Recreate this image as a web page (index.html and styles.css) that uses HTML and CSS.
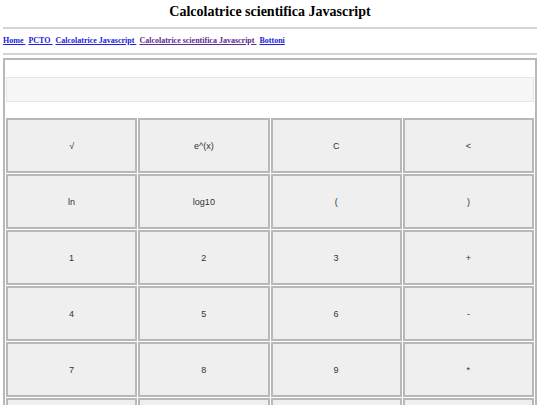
FILE: index.html
```html
<!DOCTYPE html>
<html lang="it">
<head>
    <meta charset="UTF-8">
    <meta name="viewport" content="width=device-width, initial-scale=1.0">
    <title>Calcolatrice scientifica Javascript</title>
    <link rel="stylesheet" href="styles.css">
</head>
<body>
    <h1 class="title">Calcolatrice scientifica Javascript</h1>
    <hr>
    <nav class="menu">
        <a href="#">Home&nbsp;</a>
        <a href="#">PCTO&nbsp;</a>
        <a href="#">Calcolatrice Javascript&nbsp;</a>
        <a href="#" class="visited">Calcolatrice scientifica Javascript&nbsp;</a>
        <a href="#">Bottoni</a>
    </nav>
    <hr>

    <!-- Calcolatrice -->
    <table class="calc">
        <tr>
            <td colspan="4" class="display-cell"><input type="text" id="display" class="display" readonly></td>
        </tr>
        <tr>
            <td><button class="key">&radic;</button></td>
            <td><button class="key">e^(x)</button></td>
            <td><button class="key">C</button></td>
            <td><button class="key">&lt;</button></td>
        </tr>
        <tr>
            <td><button class="key">ln</button></td>
            <td><button class="key">log10</button></td>
            <td><button class="key">(</button></td>
            <td><button class="key">)</button></td>
        </tr>
        <tr>
            <td><button class="key">1</button></td>
            <td><button class="key">2</button></td>
            <td><button class="key">3</button></td>
            <td><button class="key">+</button></td>
        </tr>
        <tr>
            <td><button class="key">4</button></td>
            <td><button class="key">5</button></td>
            <td><button class="key">6</button></td>
            <td><button class="key">-</button></td>
        </tr>
        <tr>
            <td><button class="key">7</button></td>
            <td><button class="key">8</button></td>
            <td><button class="key">9</button></td>
            <td><button class="key">*</button></td>
        </tr>
        <tr>
            <td><button class="key">0</button></td>
            <td><button class="key">.</button></td>
            <td><button class="key">=</button></td>
            <td><button class="key">/</button></td>
        </tr>
    </table>
</body>
</html>
```

FILE: styles.css
```css
/* Pagina */
body {
    margin: 0 3px;
    font-family: 'Liberation Serif', 'Times New Roman', serif;
    background-color: #fff;
    color: #000;
}

.title {
    font-size: 14px;
    line-height: 16px;
    text-align: center;
    margin: 0;
    padding: 4px 0 7px;
}

hr {
    border: none;
    border-top: 2px solid #d4d4d4;
    margin: 0;
}

/* Menu link */
.menu {
    padding: 7px 0;
    font-size: 8px;
    line-height: 10px;
    font-weight: bold;
}

.menu a {
    color: #2020dd;
    margin-right: 1px;
}

.menu a.visited {
    color: #5b2a92;
}

/* Calcolatrice */
.calc {
    width: 100%;
    table-layout: fixed;
    margin-top: 3px;
    border: 2px solid #b8b8b8;
    border-spacing: 1px;
}

.calc td {
    padding: 0;
}

.display-cell {
    height: 56px;
}

.display {
    display: block;
    width: 100%;
    height: 25px;
    box-sizing: border-box;
    border: 1px solid #e6e6e6;
    background-color: #f6f6f6;
}

.key {
    display: block;
    width: 100%;
    height: 55px;
    border: 2px solid #b8b8b8;
    background-color: #efefef;
    font-family: 'Liberation Sans', Arial, sans-serif;
    font-size: 9px;
    color: #333;
    cursor: pointer;
}

.key:hover {
    background-color: #e4e4e4;
}
```
